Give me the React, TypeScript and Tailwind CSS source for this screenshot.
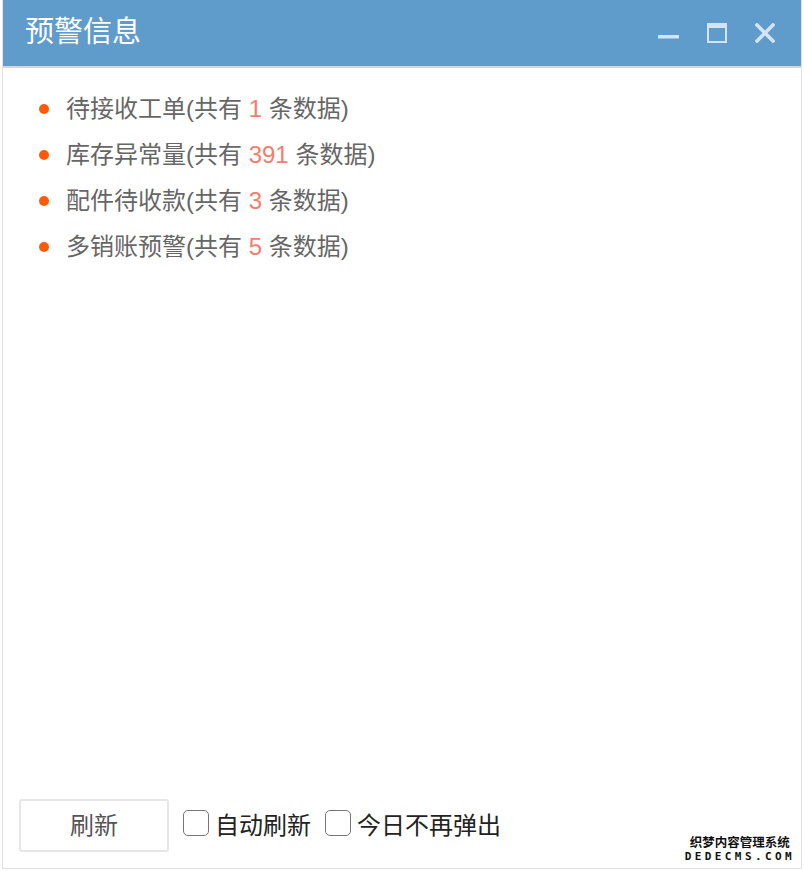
import React, { useState } from 'react'

type Alert = {
  name: string
  count: number
}

const alerts: Alert[] = [
  { name: '待接收工单', count: 1 },
  { name: '库存异常量', count: 391 },
  { name: '配件待收款', count: 3 },
  { name: '多销账预警', count: 5 },
]

function CheckItem({ label }: { label: string }) {
  const [checked, setChecked] = useState(false)
  return (
    <label className="flex cursor-pointer items-center gap-[6px]">
      <span
        onClick={() => setChecked((prev) => !prev)}
        className="mb-[6px] flex h-[26px] w-[26px] items-center justify-center rounded-[5px] border border-[#767676] bg-white"
      >
        {checked ? <span className="h-[12px] w-[12px] rounded-sm bg-[#0075ff]" /> : null}
      </span>
      <span className="text-[24px] text-[#222]">{label}</span>
    </label>
  )
}

export default function App() {
  return (
    <div
      className="relative h-[871px] w-[804px] overflow-hidden bg-white"
      style={{ fontFamily: '"Liberation Sans", "Noto Sans CJK SC", sans-serif' }}
    >
      <div className="ml-[2px] flex h-[869px] w-[800px] flex-col border-b border-l border-r border-[#e2e2e2] bg-white">
        {/* header */}
        <div className="flex h-[68px] shrink-0 items-center justify-between border-b-[2px] border-[#c7d8ea] bg-[#5f9bcb] pl-[22px] pr-[26px]">
          <h1 className="pb-[2px] text-[29px] leading-none text-white">预警信息</h1>
          <div className="flex items-center gap-[28px] text-[#d5e4f2]">
            <svg width="21" height="20" viewBox="0 0 21 20">
              <rect x="0" y="12" width="21" height="3.5" fill="currentColor" />
            </svg>
            <svg width="20" height="20" viewBox="0 0 20 20">
              <rect x="1" y="1" width="18" height="18" fill="none" stroke="currentColor" strokeWidth="2" />
              <rect x="1" y="1" width="18" height="4" fill="currentColor" />
            </svg>
            <svg width="20" height="20" viewBox="0 0 20 20">
              <path d="M2 2 L18 18 M18 2 L2 18" stroke="currentColor" strokeWidth="3.6" strokeLinecap="square" />
            </svg>
          </div>
        </div>

        {/* list */}
        <ul className="flex-1 pl-[36px] pt-[18px]">
          {alerts.map((item) => (
            <li key={item.name} className="flex h-[46px] items-center text-[24px] text-[#666]">
              <span className="mr-[17px] h-[10px] w-[10px] rounded-full bg-[#ff5a0a]" />
              <span>
                {item.name}(共有 <span className="text-[#f47d6e]">{item.count}</span> 条数据)
              </span>
            </li>
          ))}
        </ul>

        {/* footer */}
        <div className="flex items-center gap-[14px] pb-[16px] pl-[16px]">
          <button className="h-[53px] w-[150px] rounded-[3px] border-[2px] border-[#e6e6e6] bg-white text-[24px] text-[#555]">
            刷新
          </button>
          <div className="flex items-center gap-[14px]">
            <CheckItem label="自动刷新" />
            <CheckItem label="今日不再弹出" />
          </div>
        </div>
      </div>

      {/* watermark */}
      <div className="absolute bottom-[9px] right-[9px] flex flex-col items-center bg-white leading-none">
        <span className="text-[12.5px] font-bold text-[#111]">织梦内容管理系统</span>
        <span className="mt-[2px] text-[11px] font-bold tracking-[3.4px] text-[#111]" style={{ fontFamily: '"DejaVu Sans Mono", monospace' }}>
          DEDECMS.COM
        </span>
      </div>
    </div>
  )
}
